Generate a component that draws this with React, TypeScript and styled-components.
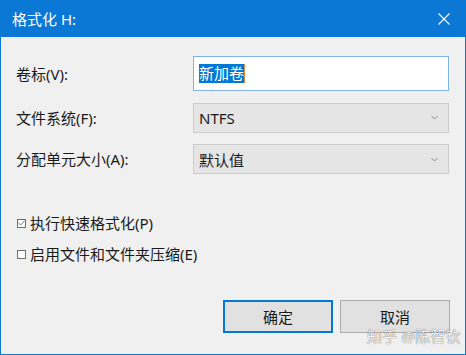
import React from "react";
import styled, { createGlobalStyle } from "styled-components";

const GlobalStyle = createGlobalStyle`
  html, body {
    margin: 0;
    padding: 0;
    background: #f0f0f0;
  }
  * {
    box-sizing: border-box;
  }
`;

const FONT = `"Segoe UI", "Noto Sans", "Noto Sans CJK SC", sans-serif`;

const Window = styled.div`
  position: relative;
  width: 466px;
  height: 355px;
  display: flex;
  flex-direction: column;
  border: 1px solid #0b78d5;
  border-top: none;
  background: #f0f0f0;
  font-family: ${FONT};
  font-size: 15px;
  color: #1a1a1a;
`;

const TitleBar = styled.div`
  height: 37px;
  flex: none;
  display: flex;
  align-items: center;
  padding: 0 15px 0 11px;
  background: #0b78d5;
  color: #ffffff;
`;

const Title = styled.div`
  flex: 1;
  font-size: 15px;
  line-height: 20px;
`;

const CloseIcon = styled.svg`
  width: 12px;
  height: 12px;
  display: block;
`;

const Body = styled.div`
  flex: 1;
  display: flex;
  flex-direction: column;
  padding: 19px 15px 21px 15px;
`;

const Form = styled.div`
  display: grid;
  grid-template-columns: 177px 256px;
  grid-template-rows: 35px 30px 30px;
  row-gap: 11.5px;
  align-items: center;
`;

const Label = styled.div`
  line-height: 20px;
  white-space: nowrap;
`;

const TextBox = styled.div`
  height: 35px;
  display: flex;
  align-items: center;
  padding-left: 5px;
  background: #ffffff;
  border: 1px solid #7eb4ea;
`;

const Selection = styled.span`
  background: #0078d7;
  color: #ffffff;
  line-height: 19px;
  border-right: 1px solid #e08a3c;
`;

const Select = styled.div`
  height: 30px;
  display: flex;
  align-items: center;
  justify-content: space-between;
  padding: 0 10px 0 5px;
  background: #e5e5e5;
  border: 1px solid #cccccc;
`;

const Chevron = styled.svg`
  width: 7px;
  height: 5px;
  display: block;
`;

const Options = styled.div`
  display: flex;
  flex-direction: column;
  gap: 11px;
  margin-top: 39px;
`;

const CheckRow = styled.label`
  display: flex;
  align-items: center;
  gap: 4px;
  line-height: 20px;
`;

const Box = styled.span`
  width: 9px;
  height: 9px;
  margin-left: 1px;
  display: flex;
  align-items: center;
  justify-content: center;
  border: 1px solid #6e6e6e;
  background: #ffffff;
`;

const Buttons = styled.div`
  margin-top: auto;
  display: flex;
  justify-content: flex-end;
  gap: 7px;
`;

const Button = styled.div<{ $primary?: boolean }>`
  width: 110px;
  height: 33px;
  display: flex;
  align-items: center;
  justify-content: center;
  background: #e1e1e1;
  border: 1px solid ${({ $primary }) => ($primary ? "#0078d7" : "#adadad")};
  box-shadow: ${({ $primary }) => ($primary ? "inset 0 0 0 1px #0078d7" : "none")};
`;

const Watermark = styled.div`
  position: absolute;
  left: 366px;
  top: 328px;
  font-size: 15px;
  line-height: 17px;
  white-space: nowrap;
  color: rgba(255, 255, 255, 0.92);
  text-shadow: 0 0 1px rgba(0, 0, 0, 0.5), 0 0 1px rgba(0, 0, 0, 0.35);
  letter-spacing: 0.2px;
`;

const Check = ({ checked }: { checked?: boolean }) => (
  <Box>
    {checked && (
      <svg width="7" height="6" viewBox="0 0 7 6">
        <path d="M0.5 3 L2.7 5 L6.5 0.8" fill="none" stroke="#707070" strokeWidth="1" />
      </svg>
    )}
  </Box>
);

const DownArrow = () => (
  <Chevron viewBox="0 0 7 5">
    <path d="M0.5 1 L3.5 4 L6.5 1" fill="none" stroke="#8a8a8a" strokeWidth="1" />
  </Chevron>
);

export default function App() {
  return (
    <>
      <GlobalStyle />
      <Window>
        <TitleBar>
          <Title>格式化 H:</Title>
          <CloseIcon viewBox="0 0 12 12">
            <path d="M0.5 0.5 L11.5 11.5 M11.5 0.5 L0.5 11.5" stroke="#ffffff" strokeWidth="1.1" />
          </CloseIcon>
        </TitleBar>
        <Body>
          <Form>
            <Label>卷标(V):</Label>
            <TextBox>
              <Selection>新加卷</Selection>
            </TextBox>
            <Label>文件系统(F):</Label>
            <Select>
              <span>NTFS</span>
              <DownArrow />
            </Select>
            <Label>分配单元大小(A):</Label>
            <Select>
              <span>默认值</span>
              <DownArrow />
            </Select>
          </Form>
          <Options>
            <CheckRow>
              <Check checked />
              执行快速格式化(P)
            </CheckRow>
            <CheckRow>
              <Check />
              启用文件和文件夹压缩(E)
            </CheckRow>
          </Options>
          <Buttons>
            <Button $primary>确定</Button>
            <Button>取消</Button>
          </Buttons>
        </Body>
        <Watermark>知乎 @陈智钦</Watermark>
      </Window>
    </>
  );
}
